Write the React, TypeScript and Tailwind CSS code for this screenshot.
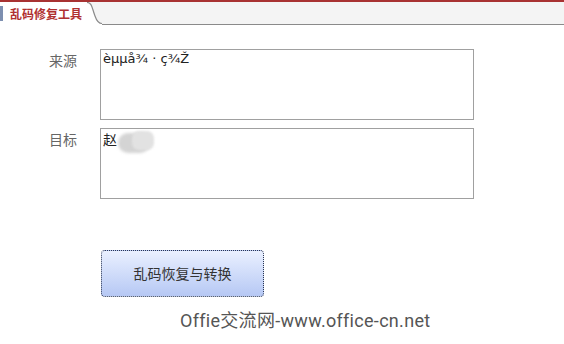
export default function App() {
  return (
    <div className="w-[564px] h-[344px] bg-white flex flex-col overflow-hidden" style={{ fontFamily: '"Noto Sans CJK SC", "Noto Sans", sans-serif' }}>
      {/* top bar with tab */}
      <div className="h-[2px] bg-[#a83232]" />
      <div className="h-[23px] flex bg-[#f4f4f4]">
        <div className="flex items-stretch bg-white">
          <div className="w-[3px] my-[4px] bg-[#7d8fb0]" />
          <div className="pl-[7px] pr-[2px] pt-[3px] text-[12px] font-bold text-[#b03030] leading-[18px]">乱码修复工具</div>
        </div>
        <svg width="18" height="23" viewBox="0 0 18 23" className="shrink-0">
          <path d="M0 0 L3 0 C8 0 8 6 11 14 C13 20 15 21.5 18 21.5 L18 23 L0 23 Z" fill="#fff" />
          <path d="M3 0.5 C8 0.5 8 6 11 14 C13 20 15 21.5 18 21.5" fill="none" stroke="#8a8a8a" strokeWidth="1.2" />
        </svg>
        <div className="flex-1 border-b-[1.5px] border-[#8a8a8a]" />
      </div>

      {/* form */}
      <div className="flex flex-col gap-[8px] pt-[24px]">
        <div className="flex">
          <div className="w-[100px] pl-[49px] pt-[2px] text-[14px] text-[#666] leading-[18px]">来源</div>
          <div className="w-[374px] h-[71px] border border-[#a0a0a0] px-[2px] pt-[1px] text-[13px] leading-[16px] text-[#222] whitespace-pre" style={{ fontFamily: '"DejaVu Sans", sans-serif' }}>
            {'èµµå¾ · ç¾Ž'}
          </div>
        </div>
        <div className="flex">
          <div className="w-[100px] pl-[49px] pt-[2px] text-[14px] text-[#666] leading-[18px]">目标</div>
          <div className="w-[374px] h-[71px] border border-[#a0a0a0] px-[2px] pt-[1px] text-[14px] leading-[18px] text-[#222] flex items-start">
            <span>赵</span>
            <span className="relative w-[36px] h-[22px] ml-[1px]">
              <span className="absolute left-0 top-[3px] w-[32px] h-[20px] rounded-full bg-[#d4d4d4] blur-[1.5px]" />
              <span className="absolute left-[14px] top-[1px] w-[22px] h-[19px] rounded-[7px] bg-[#e2e2e2] blur-[1px]" />
            </span>
          </div>
        </div>
      </div>

      <div className="pl-[101px] pt-[51px]">
        <button className="w-[163px] h-[47px] rounded-[4px] border border-dotted border-[#2a3550] bg-gradient-to-b from-[#eaf0ff] to-[#b6c8f4] text-[14px] text-[#333]">
          乱码恢复与转换
        </button>
      </div>

      <div className="pt-[13px] pl-[180px] text-[18px] leading-[22px] tracking-[0.3px] text-[#555]" style={{ fontFamily: 'Roboto, "Noto Sans CJK SC", sans-serif' }}>
        Offie交流网-www.office-cn.net
      </div>
    </div>
  )
}
